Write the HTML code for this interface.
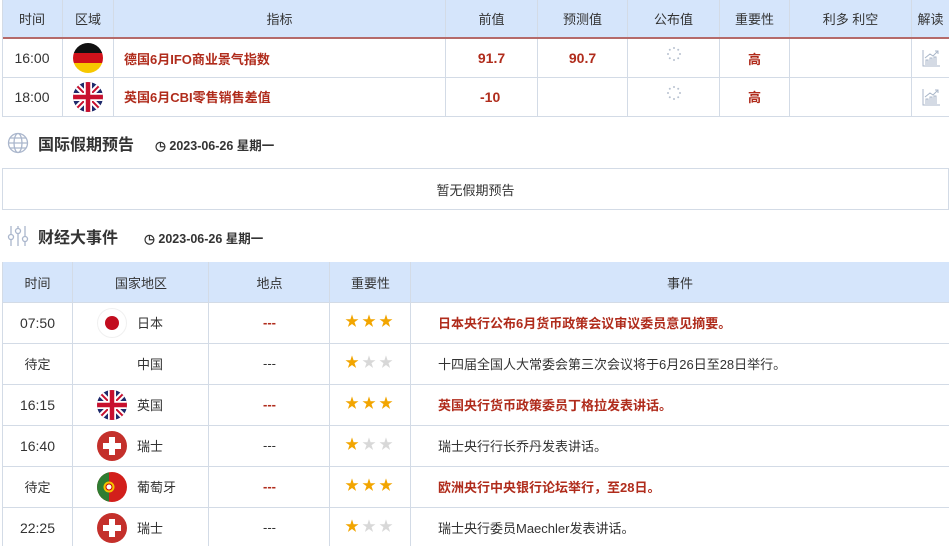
<!DOCTYPE html>
<html><head><meta charset="utf-8"><style>
*{margin:0;padding:0;box-sizing:border-box}
body{width:949px;height:546px;overflow:hidden;background:#fff;font-family:"Liberation Sans","Noto Sans CJK SC",sans-serif;font-size:13px;color:#333;position:relative}
.a{position:absolute}
.c{position:absolute;display:flex;align-items:center;justify-content:center;border-right:1px solid #d3dbe6;}
.hd{background:#d5e5fb;color:#333;font-size:13.5px}
.red{color:#b02c1c;font-weight:bold}
.line{position:absolute;left:2px;right:0;height:1px;background:#d3dbe6}
.star{font-size:14px;letter-spacing:3px}
.g{color:#f2a500}.s{color:#d8d8d8}
.r{position:absolute;height:41px;display:flex;align-items:center}
</style></head><body>
<svg width="0" height="0" style="position:absolute"><defs><g id="uk"><clipPath id="cpu"><circle cx="15" cy="15" r="15"/></clipPath><g clip-path="url(#cpu)"><rect width="30" height="30" fill="#1f2a6b"/><path d="M0 0L30 30M30 0L0 30" stroke="#fff" stroke-width="6"/><path d="M0 0L30 30M30 0L0 30" stroke="#c8102e" stroke-width="2"/><path d="M15 0v30M0 15h30" stroke="#fff" stroke-width="8"/><path d="M15 0v30M0 15h30" stroke="#c8102e" stroke-width="4.5"/></g></g><g id="ch"><circle cx="15" cy="15" r="15" fill="#c4302b"/><path d="M12 6h6v6h6v6h-6v6h-6v-6h-6v-6h6z" fill="#fff"/></g>
<g id="spin" fill="#b8c2d0"><circle cx="8" cy="2" r="1"/><circle cx="12.2" cy="3.8" r="1"/><circle cx="14" cy="8" r="1"/><circle cx="12.2" cy="12.2" r="1"/><circle cx="8" cy="14" r="1"/><circle cx="3.8" cy="12.2" r="1"/><circle cx="2" cy="8" r="1"/><circle cx="3.8" cy="3.8" r="1"/></g>
<g id="chart" fill="none" stroke="#a9b6c8" stroke-width="1"><path d="M2 2v16h17M5 17v-5h2v5M9 17v-7h2v7M13 17v-8h2v8M4 10l5-4 3 2 5-5M14 3h3v3"/></g></defs></svg>
<!-- top table -->
<div class="a hd" style="left:2px;top:0;width:947px;height:37px"></div>
<div class="a" style="left:2px;top:37px;width:947px;height:2px;background:#b56a6a"></div>
<div class="a" style="left:2px;top:0;width:1px;height:116px;background:#d3dbe6"></div>
<div class="line" style="top:77px"></div><div class="line" style="top:116px"></div>
<div class="c" style="left:2px;top:0;width:61px;height:37px">时间</div>
<div class="c" style="left:63px;top:0;width:51px;height:37px">区域</div>
<div class="c" style="left:114px;top:0;width:332px;height:37px">指标</div>
<div class="c" style="left:446px;top:0;width:92px;height:37px">前值</div>
<div class="c" style="left:538px;top:0;width:90px;height:37px">预测值</div>
<div class="c" style="left:628px;top:0;width:92px;height:37px">公布值</div>
<div class="c" style="left:720px;top:0;width:70px;height:37px">重要性</div>
<div class="c" style="left:790px;top:0;width:122px;height:37px">利多 利空</div>
<div class="c" style="left:912px;top:0;width:37px;height:37px;border-right:0">解读</div>

<div class="c" style="left:2px;top:39px;width:61px;height:38px;font-size:14px">16:00</div>
<div class="c" style="left:63px;top:39px;width:51px;height:38px"><svg width="30" height="30" viewBox="0 0 30 30"><clipPath id="cp1"><circle cx="15" cy="15" r="15"/></clipPath><g clip-path="url(#cp1)"><rect width="30" height="10" fill="#111"/><rect y="10" width="30" height="10" fill="#d0121b"/><rect y="20" width="30" height="10" fill="#f7c800"/></g></svg></div>
<div class="c red" style="left:114px;top:39px;width:332px;height:38px;justify-content:flex-start;padding-left:10px">德国6月IFO商业景气指数</div>
<div class="c red" style="left:446px;top:39px;width:92px;height:38px;font-size:14px">91.7</div>
<div class="c red" style="left:538px;top:39px;width:90px;height:38px;font-size:14px">90.7</div>
<div class="c" style="left:628px;top:39px;width:92px;height:38px;align-items:flex-start;padding-top:7px"><svg width="16" height="16"><use href="#spin"/></svg></div>
<div class="c red" style="left:720px;top:39px;width:70px;height:38px">高</div>
<div class="c" style="left:790px;top:39px;width:122px;height:38px"></div>
<div class="c" style="left:912px;top:39px;width:37px;height:38px;border-right:0"><svg width="20" height="20"><use href="#chart"/></svg></div>

<div class="c" style="left:2px;top:77px;width:61px;height:39px;font-size:14px">18:00</div>
<div class="c" style="left:63px;top:77px;width:51px;height:39px"><svg width="30" height="30" viewBox="0 0 30 30"><use href="#uk"/></svg></div>
<div class="c red" style="left:114px;top:77px;width:332px;height:39px;justify-content:flex-start;padding-left:10px">英国6月CBI零售销售差值</div>
<div class="c red" style="left:446px;top:77px;width:92px;height:39px;font-size:14px;justify-content:flex-start;padding-left:34px">-10</div>
<div class="c" style="left:538px;top:77px;width:90px;height:39px"></div>
<div class="c" style="left:628px;top:77px;width:92px;height:39px;align-items:flex-start;padding-top:8px"><svg width="16" height="16"><use href="#spin"/></svg></div>
<div class="c red" style="left:720px;top:77px;width:70px;height:39px">高</div>
<div class="c" style="left:790px;top:77px;width:122px;height:39px"></div>
<div class="c" style="left:912px;top:77px;width:37px;height:39px;border-right:0"><svg width="20" height="20"><use href="#chart"/></svg></div>

<!-- holiday -->
<svg class="a" style="left:7px;top:132px" width="22" height="22" viewBox="0 0 22 22" fill="none" stroke="#aab6cc" stroke-width="1.3"><circle cx="11" cy="11" r="9.5"/><ellipse cx="11" cy="11" rx="4" ry="9.5"/><path d="M1.5 11h19M3 6h16M3 16h16"/></svg>
<div class="a" style="left:38px;top:131px;font-size:16px;font-weight:bold;color:#333">国际假期预告</div>
<div class="a" style="left:155px;top:135px;font-size:12.5px;font-weight:bold;color:#333">◷ 2023-06-26 星期一</div>
<div class="a" style="left:2px;top:168px;width:947px;height:42px;border:1px solid #d3dbe6;display:flex;align-items:center;justify-content:center;font-size:13px">暂无假期预告</div>

<svg class="a" style="left:7px;top:225px" width="22" height="22" viewBox="0 0 22 22" fill="none" stroke="#aab6cc" stroke-width="1.3"><path d="M4 1v8M4 15v6M11 1v2M11 9v12M18 1v10M18 17v4"/><circle cx="4" cy="12" r="2.5"/><circle cx="11" cy="6" r="2.5"/><circle cx="18" cy="14" r="2.5"/></svg>
<div class="a" style="left:38px;top:224px;font-size:16px;font-weight:bold;color:#333">财经大事件</div>
<div class="a" style="left:144px;top:228px;font-size:12.5px;font-weight:bold;color:#333">◷ 2023-06-26 星期一</div>

<!-- events table -->
<div class="a hd" style="left:2px;top:262px;width:947px;height:40px"></div>
<div class="a" style="left:2px;top:262px;width:1px;height:284px;background:#d3dbe6"></div>
<div class="line" style="top:302px"></div><div class="line" style="top:343px"></div><div class="line" style="top:384px"></div><div class="line" style="top:425px"></div><div class="line" style="top:466px"></div><div class="line" style="top:507px"></div>
<div class="c" style="left:2px;top:262px;width:71px;height:284px"></div>
<div class="c" style="left:73px;top:262px;width:136px;height:284px"></div>
<div class="c" style="left:209px;top:262px;width:121px;height:284px"></div>
<div class="c" style="left:330px;top:262px;width:81px;height:284px"></div>
<div class="a" style="left:2px;top:262px;width:71px;height:40px;display:flex;align-items:center;justify-content:center">时间</div>
<div class="a" style="left:73px;top:262px;width:136px;height:40px;display:flex;align-items:center;justify-content:center">国家地区</div>
<div class="a" style="left:209px;top:262px;width:121px;height:40px;display:flex;align-items:center;justify-content:center">地点</div>
<div class="a" style="left:330px;top:262px;width:81px;height:40px;display:flex;align-items:center;justify-content:center">重要性</div>
<div class="a" style="left:411px;top:262px;width:538px;height:40px;display:flex;align-items:center;justify-content:center">事件</div>

<div class="r" style="left:2px;top:302px;width:71px;justify-content:center;font-size:14px">07:50</div>
<div class="r" style="left:97px;top:302px"><svg width="30" height="30"><circle cx="15" cy="15" r="14.5" fill="#fff" stroke="#f0f0f0"/><circle cx="15" cy="15" r="7" fill="#c20d1f"/></svg></div>
<div class="r" style="left:137px;top:302px">日本</div>
<div class="r red" style="left:209px;top:302px;width:121px;justify-content:center">---</div>
<div class="r star" style="left:345px;top:300px"><span class="g">★★★</span></div>
<div class="r red" style="left:438px;top:302px">日本央行公布6月货币政策会议审议委员意见摘要。</div>

<div class="r" style="left:2px;top:343px;width:71px;justify-content:center">待定</div>
<div class="r" style="left:137px;top:343px">中国</div>
<div class="r" style="left:209px;top:343px;width:121px;justify-content:center">---</div>
<div class="r star" style="left:345px;top:341px"><span class="g">★</span><span class="s">★★</span></div>
<div class="r" style="left:438px;top:343px">十四届全国人大常委会第三次会议将于6月26日至28日举行。</div>

<div class="r" style="left:2px;top:384px;width:71px;justify-content:center;font-size:14px">16:15</div>
<div class="r" style="left:97px;top:384px"><svg width="30" height="30"><use href="#uk"/></svg></div>
<div class="r" style="left:137px;top:384px">英国</div>
<div class="r red" style="left:209px;top:384px;width:121px;justify-content:center">---</div>
<div class="r star" style="left:345px;top:382px"><span class="g">★★★</span></div>
<div class="r red" style="left:438px;top:384px">英国央行货币政策委员丁格拉发表讲话。</div>

<div class="r" style="left:2px;top:425px;width:71px;justify-content:center;font-size:14px">16:40</div>
<div class="r" style="left:97px;top:425px"><svg width="30" height="30"><use href="#ch"/></svg></div>
<div class="r" style="left:137px;top:425px">瑞士</div>
<div class="r" style="left:209px;top:425px;width:121px;justify-content:center">---</div>
<div class="r star" style="left:345px;top:423px"><span class="g">★</span><span class="s">★★</span></div>
<div class="r" style="left:438px;top:425px">瑞士央行行长乔丹发表讲话。</div>

<div class="r" style="left:2px;top:466px;width:71px;justify-content:center">待定</div>
<div class="r" style="left:97px;top:466px"><svg width="30" height="30"><clipPath id="cpp"><circle cx="15" cy="15" r="15"/></clipPath><g clip-path="url(#cpp)"><rect width="30" height="30" fill="#d21f1b"/><rect width="12" height="30" fill="#2e7d32"/><circle cx="12" cy="15" r="5.5" fill="#f5c400"/><circle cx="12" cy="15" r="3" fill="#fff" stroke="#c00"/></g></svg></div>
<div class="r" style="left:137px;top:466px">葡萄牙</div>
<div class="r red" style="left:209px;top:466px;width:121px;justify-content:center">---</div>
<div class="r star" style="left:345px;top:464px"><span class="g">★★★</span></div>
<div class="r red" style="left:438px;top:466px">欧洲央行中央银行论坛举行，至28日。</div>

<div class="r" style="left:2px;top:507px;width:71px;justify-content:center;font-size:14px">22:25</div>
<div class="r" style="left:97px;top:507px"><svg width="30" height="30"><use href="#ch"/></svg></div>
<div class="r" style="left:137px;top:507px">瑞士</div>
<div class="r" style="left:209px;top:507px;width:121px;justify-content:center">---</div>
<div class="r star" style="left:345px;top:505px"><span class="g">★</span><span class="s">★★</span></div>
<div class="r" style="left:438px;top:507px">瑞士央行委员Maechler发表讲话。</div>
</body></html>
